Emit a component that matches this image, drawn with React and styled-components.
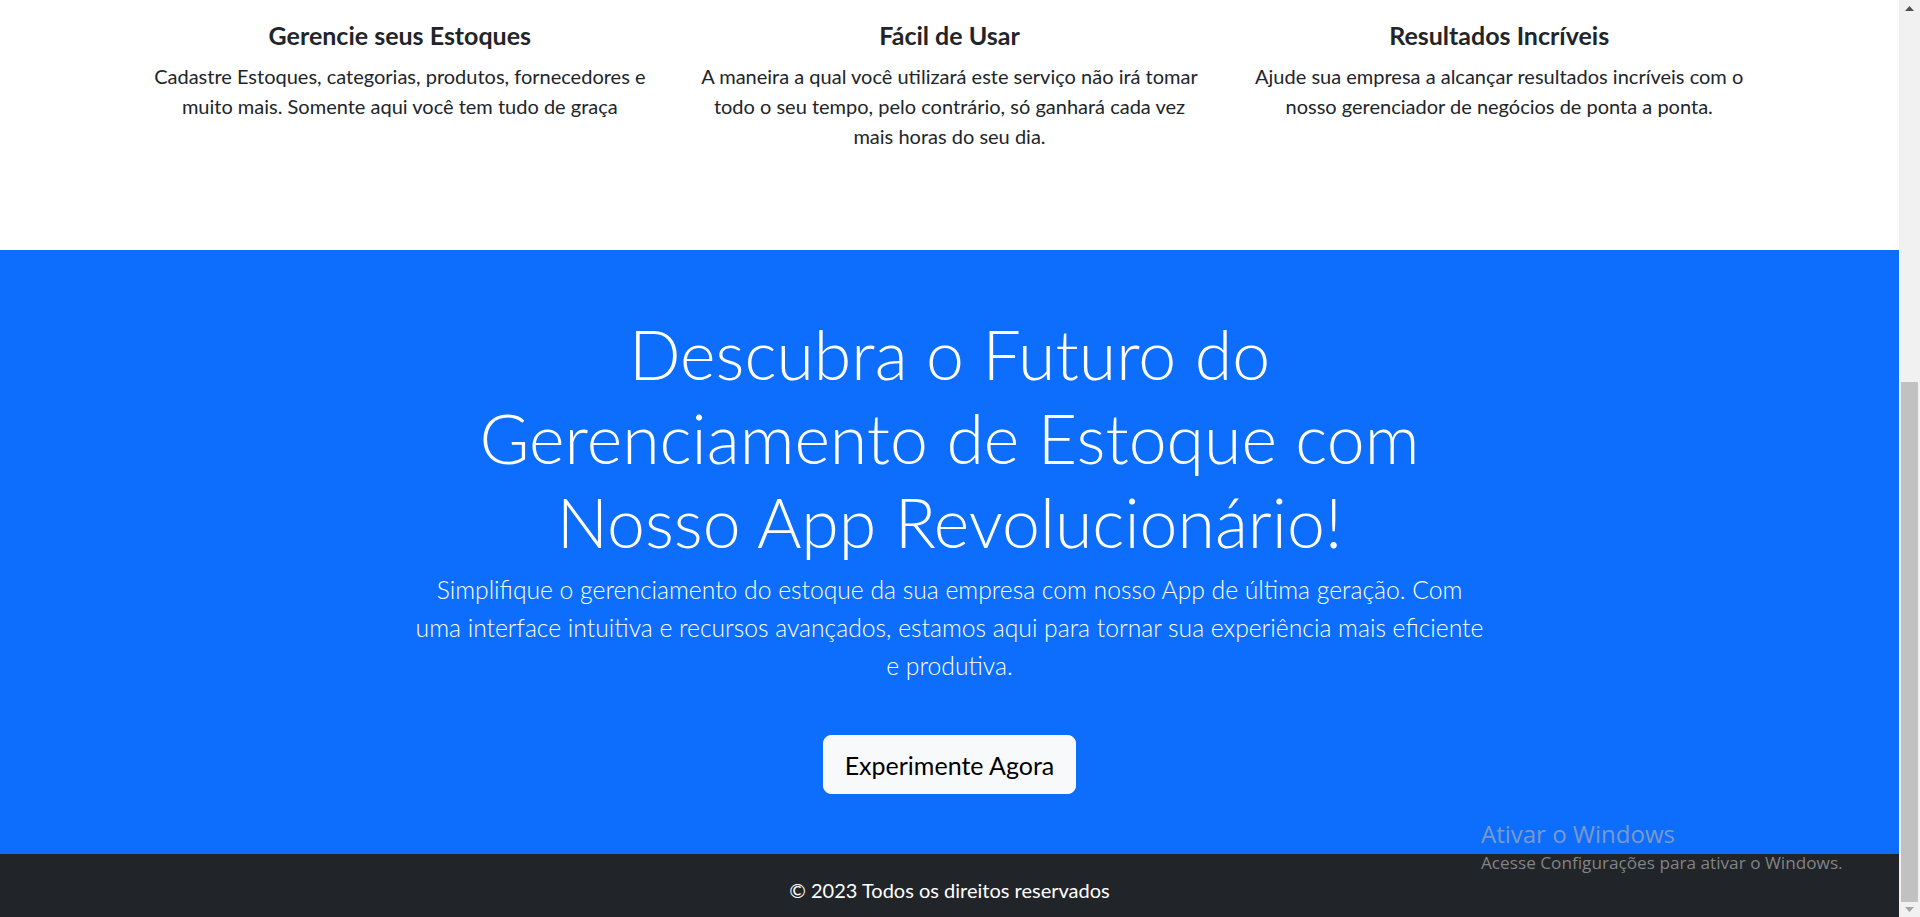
import React from "react";
import styled, { createGlobalStyle } from "styled-components";

const FONT = `"Lato", "Segoe UI", "Liberation Sans", sans-serif`;

const GlobalStyle = createGlobalStyle`
  html, body {
    margin: 0;
    padding: 0;
    height: 100%;
    overflow: hidden;
    background: #ffffff;
  }
  body {
    font-family: ${FONT};
    color: #212529;
    -webkit-font-smoothing: antialiased;
  }
  * { box-sizing: border-box; }
`;

const Viewport = styled.div`
  position: relative;
  display: flex;
  width: 100vw;
  height: 100vh;
  overflow: hidden;
`;

const Page = styled.main`
  flex: 1;
  min-width: 0;
  overflow: hidden;
  display: flex;
  flex-direction: column;
`;

const Features = styled.section`
  flex: none;
  height: 250px;
  padding-top: 21px;
  background: #ffffff;
`;

const FeatureRow = styled.div`
  width: 1649px;
  margin: 0 auto;
  display: grid;
  grid-template-columns: repeat(3, 1fr);
`;

const Feature = styled.div`
  padding: 0 18px;
  text-align: center;
`;

const FeatureTitle = styled.h4`
  margin: 0 0 11px;
  font-size: 25px;
  line-height: 29px;
  font-weight: 700;
  color: #212529;
`;

const FeatureText = styled.p`
  margin: 0;
  font-size: 20px;
  line-height: 30px;
  font-weight: 400;
  color: #212529;
`;

const Hero = styled.section`
  flex: none;
  background: #0d6efd;
  color: #ffffff;
  text-align: center;
  padding: 62px 0 60px;
  display: flex;
  flex-direction: column;
  align-items: center;
`;

const HeroTitle = styled.h1`
  margin: 0;
  max-width: 1000px;
  font-size: 68px;
  line-height: 84px;
  font-weight: 300;
`;

const HeroLead = styled.p`
  margin: 7px 0 50px;
  max-width: 1070px;
  font-size: 24.7px;
  line-height: 38px;
  font-weight: 300;
`;

const CtaButton = styled.button`
  height: 59px;
  padding: 0 21px;
  border: 1px solid #f8f9fa;
  border-radius: 8px;
  background: #f8f9fa;
  color: #000000;
  font-family: ${FONT};
  font-size: 25px;
  line-height: 36px;
  cursor: pointer;
`;

const Footer = styled.footer`
  flex: none;
  background: #212529;
  color: #ffffff;
  text-align: center;
  padding: 24px 0;
  font-size: 20px;
  line-height: 24px;
`;

const ScrollRail = styled.div`
  width: 21px;
  flex: none;
  background: #f1f1f1;
  display: flex;
  flex-direction: column;
`;

const ArrowButton = styled.div`
  height: ${(p) => p.$h}px;
  flex: none;
  display: flex;
  align-items: center;
  justify-content: center;
`;

const Track = styled.div`
  flex: 1;
  display: flex;
  flex-direction: column;
  justify-content: flex-end;
`;

const Thumb = styled.div`
  height: 520px;
  margin: 0 2px;
  background: #c1c1c1;
`;

const Watermark = styled.div`
  position: absolute;
  left: 1481px;
  top: 817px;
  color: rgba(170, 170, 170, 0.73);
  font-family: "Open Sans", "Noto Sans", sans-serif;
  pointer-events: none;
`;

const WatermarkTitle = styled.div`
  font-size: 24px;
  line-height: 34px;
`;

const WatermarkText = styled.div`
  font-size: 17.2px;
  line-height: 24px;
`;

const features = [
  {
    title: "Gerencie seus Estoques",
    text: "Cadastre Estoques, categorias, produtos, fornecedores e muito mais. Somente aqui você tem tudo de graça",
  },
  {
    title: "Fácil de Usar",
    text: "A maneira a qual você utilizará este serviço não irá tomar todo o seu tempo, pelo contrário, só ganhará cada vez mais horas do seu dia.",
  },
  {
    title: "Resultados Incríveis",
    text: "Ajude sua empresa a alcançar resultados incríveis com o nosso gerenciador de negócios de ponta a ponta.",
  },
];

function Triangle({ up, color }) {
  return (
    <svg width="9" height="5" viewBox="0 0 9 5">
      {up ? (
        <polygon points="0,5 4.5,0 9,5" fill={color} />
      ) : (
        <polygon points="0,0 9,0 4.5,5" fill={color} />
      )}
    </svg>
  );
}

export default function App() {
  return (
    <>
      <GlobalStyle />
      <Viewport>
        <Page>
          <Features>
            <FeatureRow>
              {features.map((f) => (
                <Feature key={f.title}>
                  <FeatureTitle>{f.title}</FeatureTitle>
                  <FeatureText>{f.text}</FeatureText>
                </Feature>
              ))}
            </FeatureRow>
          </Features>
          <Hero>
            <HeroTitle>
              Descubra o Futuro do Gerenciamento de Estoque com Nosso App
              Revolucionário!
            </HeroTitle>
            <HeroLead>
              Simplifique o gerenciamento do estoque da sua empresa com nosso
              App de última geração. Com uma interface intuitiva e recursos
              avançados, estamos aqui para tornar sua experiência mais
              eficiente e produtiva.
            </HeroLead>
            <CtaButton type="button">Experimente Agora</CtaButton>
          </Hero>
          <Footer>© 2023 Todos os direitos reservados</Footer>
        </Page>
        <ScrollRail>
          <ArrowButton $h={17}>
            <Triangle up color="#505050" />
          </ArrowButton>
          <Track>
            <Thumb />
          </Track>
          <ArrowButton $h={15}>
            <Triangle color="#a3a3a3" />
          </ArrowButton>
        </ScrollRail>
        <Watermark>
          <WatermarkTitle>Ativar o Windows</WatermarkTitle>
          <WatermarkText>Acesse Configurações para ativar o Windows.</WatermarkText>
        </Watermark>
      </Viewport>
    </>
  );
}
